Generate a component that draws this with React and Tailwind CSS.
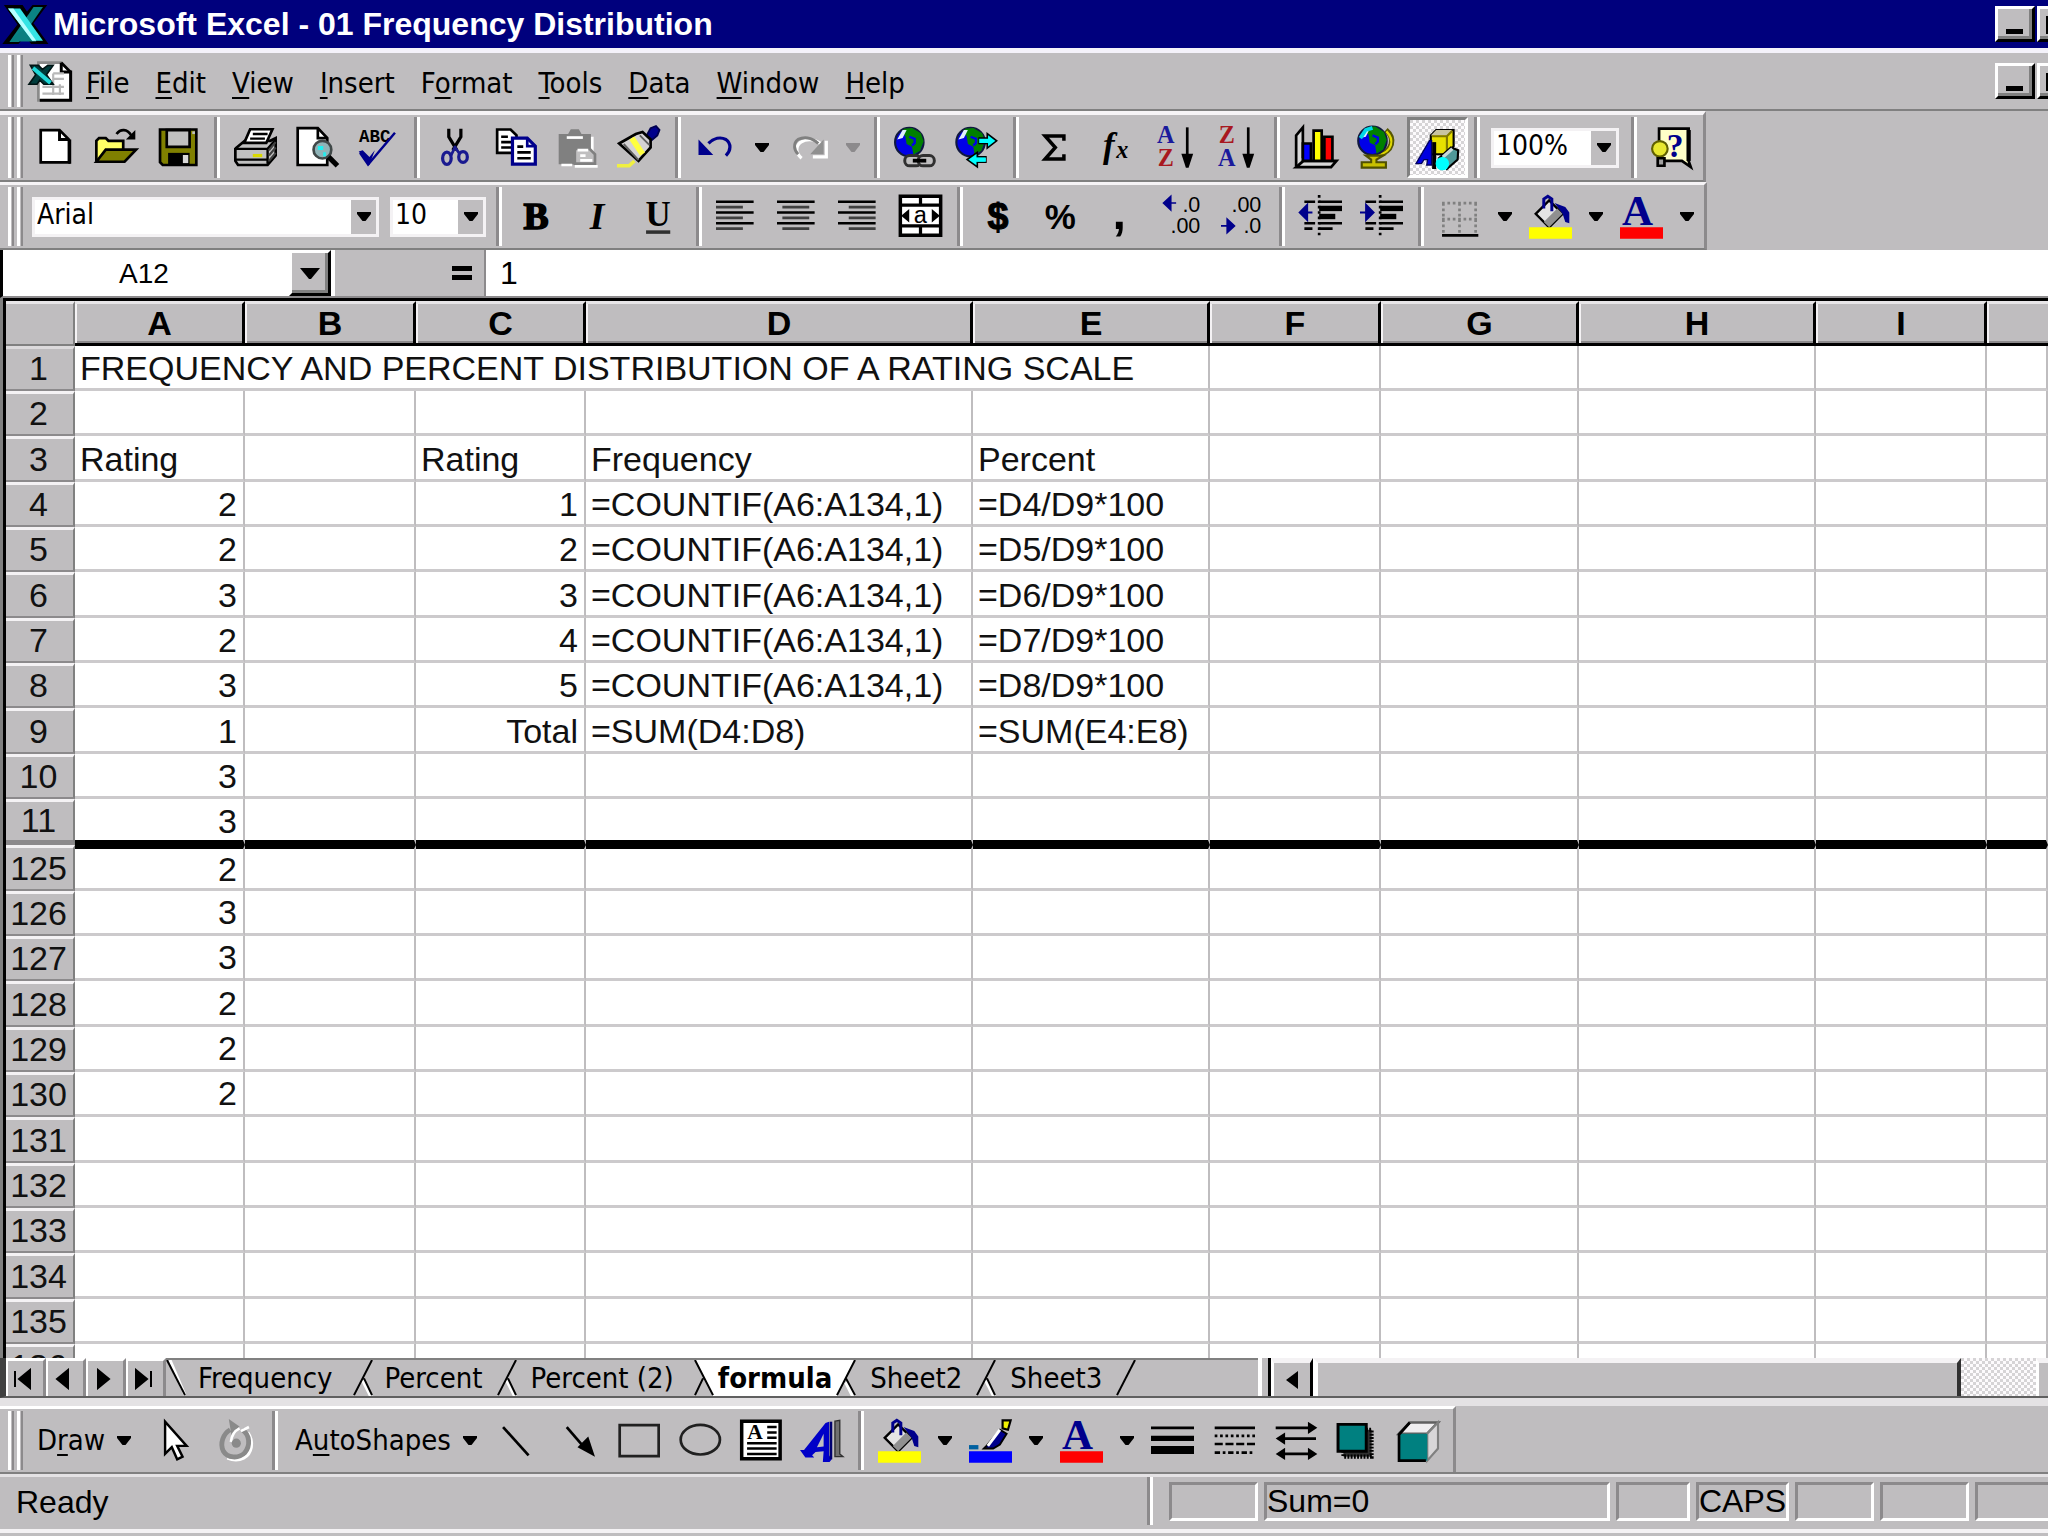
import React, { useState } from 'react';

// --- Constants ---
const MENUS = [
    { before: '', key: 'F', after: 'ile' },
    { before: '', key: 'E', after: 'dit' },
    { before: '', key: 'V', after: 'iew' },
    { before: '', key: 'I', after: 'nsert' },
    { before: 'F', key: 'o', after: 'rmat' },
    { before: '', key: 'T', after: 'ools' },
    { before: '', key: 'D', after: 'ata' },
    { before: '', key: 'W', after: 'indow' },
    { before: '', key: 'H', after: 'elp' },
];

const COLUMNS = ['A', 'B', 'C', 'D', 'E', 'F', 'G', 'H', 'I', 'J'];

const ROWS = [
    { n: 1, cells: { A: 'FREQUENCY AND PERCENT DISTRIBUTION OF A RATING SCALE' }, spill: 5 },
    { n: 2, cells: {} },
    { n: 3, cells: { A: 'Rating', C: 'Rating', D: 'Frequency', E: 'Percent' } },
    { n: 4, cells: { A: 2, C: 1, D: '=COUNTIF(A6:A134,1)', E: '=D4/D9*100' } },
    { n: 5, cells: { A: 2, C: 2, D: '=COUNTIF(A6:A134,1)', E: '=D5/D9*100' } },
    { n: 6, cells: { A: 3, C: 3, D: '=COUNTIF(A6:A134,1)', E: '=D6/D9*100' } },
    { n: 7, cells: { A: 2, C: 4, D: '=COUNTIF(A6:A134,1)', E: '=D7/D9*100' } },
    { n: 8, cells: { A: 3, C: 5, D: '=COUNTIF(A6:A134,1)', E: '=D8/D9*100' } },
    { n: 9, cells: { A: 1, C: 'Total', D: '=SUM(D4:D8)', E: '=SUM(E4:E8)' } },
    { n: 10, cells: { A: 3 } },
    { n: 11, cells: { A: 3 } },
    { n: 125, cells: { A: 2 } },
    { n: 126, cells: { A: 3 } },
    { n: 127, cells: { A: 3 } },
    { n: 128, cells: { A: 2 } },
    { n: 129, cells: { A: 2 } },
    { n: 130, cells: { A: 2 } },
    { n: 131, cells: {} },
    { n: 132, cells: {} },
    { n: 133, cells: {} },
    { n: 134, cells: {} },
    { n: 135, cells: {} },
    { n: 136, cells: {} },
];

const UI_FONT = "font-['DejaVu_Sans_Condensed','DejaVu_Sans',sans-serif]";
const CELL_FONT = "font-['Liberation_Sans',sans-serif]";
const RAISED = 'border-t-[3px] border-l-[3px] border-r-[3px] border-b-[3px] border-t-white border-l-white border-r-black border-b-black shadow-[inset_-3px_-3px_0_#808080]';
const DITHER = 'bg-[repeating-conic-gradient(#fdfbfd_0_25%,#d6d4d6_0_50%)] bg-[length:6px_6px]';

// --- Icons ---
const Icon = ({ children }) => (
    <svg viewBox="0 0 16 16" className="w-[43px] h-[43px] shrink-0 overflow-visible" fill="none" stroke="#000" strokeWidth="1" aria-hidden="true">
        {children}
    </svg>
);

const IconText = (props) => <text stroke="none" fill="#000" textAnchor="middle" fontFamily="Liberation Serif, serif" {...props} />;

const ExcelLogo = () => (
    <Icon>
        <path d="M1.500 1.500h5l2 3 2.500-3h3.500l-4.500 6 5 7h-4.500l-2.500-3.500-3 3.500H1l5-6.500z" fill="#001820" strokeWidth="1.600" />
        <path d="M11 1.500h3.500L5.500 14.500H2z" fill="#0a8484" stroke="none" />
        <path d="M9 9l3 5.300H2.500L5 11.500z" fill="#0a7f80" stroke="none" />
        <path d="M1.500 2H6l8.500 12H10.500z" fill="#35e4e4" stroke="none" />
        <path d="M1.500 2h2l8.500 12h-1.500z" fill="#b8ffff" stroke="none" />
    </Icon>
);

const WorkbookIcon = () => (
    <Icon>
        <path d="M3.500 1h8.500l3.500 3.500v10.500h-12z" fill="#fff" stroke="#8a8a8a" />
        <path d="M12 1v3.500h3.500V15H4" strokeWidth="1.100" />
        <path d="M12 1l3.500 3.500" />
        <path d="M9 5h4M9 7h4M5 10h8M5 12.500h8M9 5v8M11.500 9v4" stroke="#b8b8b8" strokeWidth=".8" />
        <path d="M.5 2h3l1.500 1.500L7 2h2L6.500 5.500 9 9H5.500L4 7.500 3 9H0l2.500-3.500z" fill="#003c3c" stroke="#001414" strokeWidth=".6" />
        <path d="M1.500 3l6.500 5.500" stroke="#20d8d8" strokeWidth="1.500" />
    </Icon>
);

const NewIcon = () => (
    <Icon>
        <path d="M2.500 1.500h7l3.500 3.500v8.500h-10.500z" fill="#fff" />
        <path d="M9.500 1.500v3.500h3.500M13.300 5v9" strokeWidth="1.100" />
    </Icon>
);

const OpenIcon = () => (
    <Icon>
        <path d="M.5 13V5.500l1-1h2.500l1 1h5.500v3.500" fill="#ffff66" />
        <path d="M.5 13.300L4 8.800h11.300l-4.300 4.500z" fill="#808000" />
        <path d="M8 3c1.500-2 4-2 5.500.5" />
        <path d="M15 1.500V5h-3.500z" fill="#000" stroke="none" />
    </Icon>
);

const SaveIcon = () => (
    <Icon>
        <path d="M1.500 1.300h13.500v13.200H2.500l-1-1z" fill="#808000" />
        <path d="M4 1.500h8.500v6.300H4z" fill="#c0c0c0" />
        <path d="M4.500 10h8v4.500h-8z" fill="#000" stroke="none" />
        <path d="M10 10.800h2v3h-2z" fill="#d8d8d8" stroke="none" />
        <path d="M13.500 2h1v1h-1z" fill="#c0c0c0" stroke="none" />
    </Icon>
);

const PrintIcon = () => (
    <Icon>
        <path d="M1 8l3-2.500h9.500L15.500 4.500V11l-3 3.500H1.500L.5 13V8.500z" fill="#c0c0c0" />
        <path d="M6 1.200h8.300L12 6.300H3.800z" fill="#fff" />
        <path d="M7 3h5.500M6 4.700h5.500M.5 8.500h12V14M12.500 8.500l3-3.500M.5 12.500h12" strokeWidth=".9" />
        <path d="M13 9l2.500-3M13 11l2.500-3M13 13l2.500-3" stroke="#404040" strokeWidth=".8" />
        <path d="M7 11h3.500" stroke="#d8d800" strokeWidth="1.200" />
    </Icon>
);

const PreviewIcon = () => (
    <Icon>
        <path d="M1 .8h7.500L12 4.500v10H1z" fill="#fff" />
        <path d="M8.500.8v3.700H12" />
        <circle cx="10.200" cy="8.800" r="3.300" fill="#8fb4b8" stroke="#404848" />
        <path d="M8.500 8.200h2M10.500 10.500h1" stroke="#20f0f0" strokeWidth="1.500" />
        <path d="M12.500 11.500l3.300 3.300" strokeWidth="1.900" />
    </Icon>
);

const SpellIcon = () => (
    <Icon>
        <IconText x="7" y="6" fontSize="6.500" fontFamily="Liberation Mono, monospace" fontWeight="bold">ABC</IconText>
        <path d="M1.500 10l3 4.300L14.500 2.500" stroke="#00008c" strokeWidth=".9" />
        <path d="M1 9.500l1.500-.5 2.500 2.500 2-2.500L5 14.500z" fill="#00008c" stroke="none" />
    </Icon>
);

const CutIcon = () => (
    <Icon>
        <path d="M5.500 1v3l3 5M10 1v3l-3 5" strokeWidth="1.200" />
        <ellipse cx="4.800" cy="12" rx="1.600" ry="2.300" stroke="#1a1a90" strokeWidth="1.200" />
        <ellipse cx="10.800" cy="11.500" rx="1.600" ry="2" stroke="#1a1a90" strokeWidth="1.200" />
        <path d="M8 7.500L6.300 11M7.500 7.500L9.300 10" stroke="#1a1a90" />
    </Icon>
);

const CopyIcon = () => (
    <Icon>
        <path d="M.8 1.300h5L8 3.500V10H.8z" fill="#fff" />
        <path d="M2.300 4h2.500M2.300 6h4M2.300 8h4" />
        <path d="M6.500 4.500H12l3 3v6.700H6.500z" fill="#fff" stroke="#00008c" strokeWidth="1.200" />
        <path d="M12 4.500v3h3" stroke="#00008c" />
        <path d="M8.300 7.700h2.200M8.300 9.800h5M8.300 12h5" />
    </Icon>
);

const PasteIcon = () => (
    <Icon>
        <path d="M1 3h3.500l1-1.800h3l1 1.800H13v11.200H1z" fill="#808080" stroke="none" />
        <path d="M4 4.300h6" stroke="#fff" />
        <path d="M13.500 4v6M2 14.500h4" stroke="#fff" />
        <path d="M7 8.500h5.500l2 2v3.500H7z" fill="#c0bfc0" stroke="#808080" />
        <path d="M8 9h4M9 11h2M9 12.800h4.500M7 15h8.500" stroke="#fff" />
    </Icon>
);

const PainterIcon = () => (
    <Icon>
        <path d="M10.500 4.500L12.500.8l2-.8 1.300 1.500-.8 2-3 2.500z" fill="#00008c" stroke="#000050" strokeWidth=".7" />
        <path d="M.8 6.500L7 3l2.500-.8L12.500 5v3L8 13z" fill="#d4d2d4" />
        <path d="M5.500 4.500l4 6" stroke="#ffff40" strokeWidth="2.200" />
        <path d="M2.500 6.700l5.500 6M8.500 3.500l3.500 3.500" stroke="#606060" strokeWidth=".7" />
        <path d="M0 14.800h4.500l2-1.800" stroke="#f0f040" strokeWidth="1.300" />
    </Icon>
);

const UndoIcon = () => (
    <Icon>
        <path d="M5 6.500C7 4.500 9.500 4 11.500 5c2 1.500 2 4 0 6" stroke="#00008c" strokeWidth="1.200" />
        <path d="M1.300 5v5.800h5.500z" fill="#00008c" stroke="none" />
    </Icon>
);

const RedoIcon = () => (
    <Icon>
        <path d="M13.500 7C11 5 8 4.500 5.500 6c-2 1.500-2 4 .3 6M15 5.500v6H10" stroke="#fff" strokeWidth="1.200" />
        <path d="M12 6.500C9.500 4 6.500 4 4.500 5c-2 1.500-1.500 4 0 5.500" stroke="#808080" strokeWidth="1.100" />
        <path d="M14 5v5.500H9z" fill="#909090" stroke="none" />
    </Icon>
);

const Globe = ({ cx = 6, cy = 6 }) => (
    <>
        <circle cx={cx} cy={cy} r="5.300" fill="#0000e8" stroke="#101840" strokeWidth=".8" />
        <path d={`M${cx - 2} ${cy - 5}l3-.3 3.300 2 1 3-1.300 3.500-2.500 1.500-.5-3-2-1-.5-3-1.500-1z`} fill="#008000" stroke="none" />
        <path d={`M${cx - 4.500} ${cy - 1}l2-3.500 1.500 0-1.500 3z`} fill="#e0f0ff" stroke="none" />
        <path d={`M${cx} ${cy - 2}l2 .8v1.500l-1 1`} stroke="#0000e8" strokeWidth=".9" />
    </>
);

const HyperlinkIcon = () => (
    <Icon>
        <Globe cx={5.7} cy={6} />
        <rect x="4" y="11" width="6" height="3.800" rx="1.800" stroke="#303030" strokeWidth="1.100" fill="#c0bfc0" />
        <rect x="9" y="11" width="6" height="3.800" rx="1.800" stroke="#303030" strokeWidth="1.100" fill="#c0bfc0" />
        <path d="M7 12.900h5" strokeWidth="1.400" />
    </Icon>
);

const WebIcon = () => (
    <Icon>
        <Globe cx={5.8} cy={6} />
        <path d="M9 4.500h3V2.800l3.500 2.700L12 8.200V6.500H9z" fill="#00ffff" strokeWidth=".6" />
        <path d="M11.500 11.500H8.300V9.800L4.500 12.500l3.800 2.700v-1.700h3.200z" fill="#00ffff" strokeWidth=".6" />
        <path d="M9 4.700h4v1.600H9zM7 11.700h4.500v1.600H7z" fill="#00ffff" stroke="none" />
    </Icon>
);

const SumIcon = () => (
    <Icon>
        <path d="M11.500 5.500V3.700H4.500l3.800 4.300-3.800 4.300h7v-1.800" strokeWidth="1.300" />
    </Icon>
);

const FunctionIcon = () => (
    <Icon>
        <IconText x="5.500" y="11.500" fontSize="13" fontStyle="italic" fontWeight="bold">f</IconText>
        <IconText x="10.500" y="12" fontSize="9" fontStyle="italic" fontWeight="bold">x</IconText>
    </Icon>
);

const SortIcon = ({ top, bottom, topColor, bottomColor }) => (
    <Icon>
        <IconText x="4" y="6.500" fontSize="9" fontWeight="bold" fill={topColor}>{top}</IconText>
        <IconText x="4" y="15" fontSize="9" fontWeight="bold" fill={bottomColor}>{bottom}</IconText>
        <path d="M12 .5V12" />
        <path d="M9.800 10.300h4.400L12.500 15.500h-1z" fill="#000" stroke="none" />
    </Icon>
);

const ChartIcon = () => (
    <Icon>
        <path d="M.8 15V3.500l2.500-3V12" fill="#d8d8d8" />
        <path d="M.8 15.300h13l2-2.300H3.500z" fill="#d8d8d8" />
        <path d="M3.300 6.500h3V13h-3z" fill="#0000ff" />
        <path d="M7.300 1.700h3V13h-3z" fill="#ffff00" />
        <path d="M11.300 4h3v9h-3z" fill="#ff0000" />
    </Icon>
);

const MapIcon = () => (
    <Icon>
        <path d="M11.500 1.500c3.500 3 3 8-3.500 9.500" stroke="#585800" strokeWidth="2" />
        <path d="M11.700 2c3 3 2.500 7.500-3.200 8.800" stroke="#e0d800" strokeWidth=".8" />
        <Globe cx={6.500} cy={5.500} />
        <path d="M2 4.500l2-3 2.500-.8" stroke="#00d8e8" strokeWidth="1.400" />
        <path d="M4 11h6.500l-2.500 1.500v1h3.500v2h-9v-2H6v-1z" fill="#c8c000" stroke="#505000" strokeWidth=".8" />
    </Icon>
);

const DrawingIcon = () => (
    <Icon>
        <path d="M5.500 3.500l2-2h6.500v6l-2 3H5.500z" fill="#e8e000" strokeWidth=".8" />
        <path d="M5.500 3.500l2-2h6l-2 2z" fill="#c8c4a0" stroke="none" />
        <path d="M6 3.800h5.500v6M11.500 3.800l2-2" stroke="#807800" strokeWidth=".8" />
        <path d="M6 6v10h1.500V6z" fill="#000" stroke="none" />
        <path d="M5.800 5.500v9H4l.3-2H3l-1 1.500H0L5 5.500z" fill="#0000e0" stroke="#000060" strokeWidth=".5" />
        <path d="M8.500 12l4.500-4 2.700 1-.2 3.500-4 3.500z" fill="#509898" strokeWidth=".8" />
        <path d="M10 11.500l3.500-3" stroke="#c8d8d8" strokeWidth="1.200" />
        <circle cx="9.800" cy="14" r="2.500" fill="#00ffff" stroke="none" />
    </Icon>
);

const HelpIcon = () => (
    <Icon>
        <path d="M3 1h11v12l.8 2.300L11.500 13H3z" fill="#ffffc8" />
        <path d="M14 1.500V13" strokeWidth="1.600" />
        <IconText x="9" y="11.500" fontSize="12.500" fontWeight="bold" fill="#00008c">?</IconText>
        <circle cx="3.300" cy="8.500" r="2.900" fill="#e8e830" stroke="#606000" strokeWidth=".8" />
        <path d="M2.500 12H5v2.800H2.500z" fill="#a0a0a0" />
    </Icon>
);

const AlignIcon = ({ short }) => (
    <Icon>
        <path d="M0 2.500h14M0 6.500h14M0 10.500h14" />
        <path d={`M${short} 4.500h10M${short} 8.500h10M${short} 12.500h10`} stroke="#404040" />
    </Icon>
);

const MergeIcon = () => (
    <Icon>
        <path d="M.5.500h15v14.500H.5z" fill="#fff" strokeWidth="1.300" />
        <path d="M.5 3.800h15M.5 11.500h15M8 .5v3.300M8 11.500V15" strokeWidth="1.200" />
        <path d="M.8 7.700l3-2.500v5zM15.200 7.700l-3-2.500v5z" fill="#000" stroke="none" />
        <IconText x="8" y="10.500" fontSize="9" fontFamily="Liberation Mono, monospace">a</IconText>
    </Icon>
);

const DecimalIcon = ({ increase }) => (
    <Icon>
        <IconText x="15" y="6.500" fontSize="8" textAnchor="end" fontFamily="Liberation Sans, sans-serif">{increase ? '.0' : '.00'}</IconText>
        <IconText x="15" y="14" fontSize="8" textAnchor="end" fontFamily="Liberation Sans, sans-serif">{increase ? '.00' : '.0'}</IconText>
        {increase
            ? <path d="M6 3H3M1.300 3L4 .5v5z" fill="#00008c" stroke="#00008c" strokeWidth=".6" />
            : <path d="M0 11.500h3M5 11.500L2.300 9v5z" fill="#00008c" stroke="#00008c" strokeWidth=".6" />}
    </Icon>
);

const IndentIcon = ({ right }) => (
    <Icon>
        <path d="M2 2.500h4M2 10.500h4M2 12.500h3" />
        <path d="M7.500 0v15" strokeDasharray="1 1" />
        <path d="M7.500 2.500h8.500M7.500 10.500h8.500M7.500 12.500h5" />
        <path d="M7.500 5h8.500" strokeWidth="2" />
        <path d="M7.500 8h6" strokeWidth="2" />
        {right
            ? <path d="M0 6.500h3M5 6.500L2.300 3.800v5.400z" fill="#00008c" stroke="#00008c" strokeWidth=".8" />
            : <path d="M5 6.500H3M.3 6.500L3 3.800v5.400z" fill="#00008c" stroke="#00008c" strokeWidth=".8" />}
    </Icon>
);

const BordersIcon = () => (
    <Icon>
        <path d="M1.500 3h13M1.500 9h13M2 3v11M8 3v11M14 3v11" stroke="#808080" strokeDasharray="1 1" />
        <path d="M1.500 15h13.500" />
    </Icon>
);

const BucketIcon = () => (
    <Icon>
        <path d="M2.500 7L7.500 2l5 5-5 5z" fill="#e4e4e4" strokeWidth=".9" />
        <path d="M7.500 12l5-5-2-2-5 5z" fill="#909090" stroke="none" />
        <path d="M5.500 5V1.500l1.500-1 1.500 1V6" stroke="#00008c" strokeWidth="1.100" />
        <path d="M9.500 3l4 1.500 1.500 2v4l-1.500-.5-1-3z" fill="#00008c" stroke="none" />
        <path d="M0 12h16v4.300H0z" fill="#ffff00" stroke="none" />
    </Icon>
);

const LineColorIcon = () => (
    <Icon>
        <path d="M12.500.500h3L14.500 4l-2-.5z" fill="#f0f000" strokeWidth=".8" />
        <path d="M11.500 4l-5 6-1 1h3.500l2.500-1.500 2.500-4z" fill="#00008c" strokeWidth=".7" />
        <path d="M11.500 4l-4.500 6" stroke="#fff" strokeWidth="1.100" />
        <path d="M0 10.500h3.500" stroke="#0060a0" strokeWidth="1.600" />
        <path d="M0 12h16v4.300H0z" fill="#0000ff" stroke="none" />
    </Icon>
);

const FontColorIcon = () => (
    <Icon>
        <IconText x="6.500" y="11" fontSize="16" fontWeight="bold" fill="#00008c">A</IconText>
        <path d="M0 12h16v4.300H0z" fill="#ff0000" stroke="none" />
    </Icon>
);

const PointerIcon = () => (
    <Icon>
        <path d="M4.500 1v12l2.500-2.500 2 4.500 2-1-2-4h3.500z" fill="#fff" strokeWidth=".9" />
    </Icon>
);

const RotateIcon = () => (
    <Icon>
        <path d="M12.500 5c2.500 3.500 1.500 8-1.500 9.500-2 1-4 .8-6 0" stroke="#fff" strokeWidth="1.300" />
        <path d="M10.500 4c3 2 3 6 1 8.500-2.500 2.500-6.500 2-8-.5-1.500-3 0-6.500 2.500-8" stroke="#8a8a8a" strokeWidth="1.800" />
        <path d="M5.500 0l4 2.800L6.500 6z" fill="#8a8a8a" stroke="none" />
        <path d="M9.500 3.500c-2 1-3 3-3.200 5M13 3l-3 1.500" stroke="#fff" />
        <circle cx="8.300" cy="9" r="1.700" fill="#8a8a8a" stroke="none" />
    </Icon>
);

const LineIcon = () => (
    <Icon>
        <path d="M3 3l9.500 10.500" />
    </Icon>
);

const ArrowIcon = () => (
    <Icon>
        <path d="M4 3l6 7" />
        <path d="M14.500 14L8 10.500l4-4z" fill="#000" stroke="none" />
    </Icon>
);

const RectIcon = () => (
    <Icon>
        <path d="M1 2.300h14.500v11.500H1z" stroke="#202020" />
    </Icon>
);

const OvalIcon = () => (
    <Icon>
        <ellipse cx="8.300" cy="7.700" rx="7.300" ry="5.500" stroke="#202020" />
    </Icon>
);

const TextBoxIcon = () => (
    <Icon>
        <path d="M1 .8h14.300v14H1z" fill="#fff" strokeWidth="1.300" />
        <IconText x="6" y="7.500" fontSize="8" fontWeight="bold">A</IconText>
        <path d="M10.500 3h3.500M10.500 5h3.500M10.500 7h3.500M3 9h11M3 11h11M3 13h11" strokeWidth=".9" />
    </Icon>
);

const WordArtIcon = () => (
    <Icon>
        <path d="M13 .8l1.800-.3V13l1.200 1h-3z" fill="#707070" stroke="#303030" strokeWidth=".5" />
        <path d="M10.800 1v12.500l1 1.500-.8 1H8.500l.3-4-3 .3L4.500 13.500l.8.8H2L0 11.500h1.500L9.500 1.500z" fill="#0000c8" stroke="none" />
        <path d="M8.800 5.500v4.700l-2.500.3z" fill="#c0bfc0" stroke="none" />
        <path d="M11.500 1v14" stroke="#000070" />
    </Icon>
);

const LineStyleIcon = () => (
    <Icon>
        <path d="M0 3.300h16" />
        <path d="M0 7.200h16" strokeWidth="2" />
        <path d="M0 11.500h16" strokeWidth="3" />
    </Icon>
);

const DashStyleIcon = () => (
    <Icon>
        <path d="M1 3.300h15" />
        <path d="M1 6.300h15" strokeDasharray="1 1" />
        <path d="M1 9.300h15" strokeDasharray="3 1" />
        <path d="M1 12.500h15" strokeDasharray="2 1 1 1" />
    </Icon>
);

const ArrowStyleIcon = () => (
    <Icon>
        <path d="M1 3.300h13M3 7.300h13M3 13h12" />
        <path d="M16.500 3.300L13 1v4.600zM1 7.300L4.500 5v4.600zM1 13l3.500-2.300v4.600zM16.500 13L13 10.700v4.600z" fill="#000" stroke="none" />
    </Icon>
);

const ShadowIcon = () => (
    <Icon>
        <path d="M3.500 4h10.500v10H3.500z" stroke="#000" strokeWidth="1.500" strokeDasharray=".7 .5" fill="#303030" />
        <path d="M1.500 2h10.500v10H1.500z" fill="#008080" strokeWidth="1.100" />
    </Icon>
);

const CubeIcon = () => (
    <Icon>
        <path d="M1.500 5.500L5.500 1.300h10.500L12 5.500z" fill="#f0eef0" stroke="#606060" />
        <path d="M12 5.500l4-4.200V11l-4 4.500z" fill="#d8d6d8" stroke="#808080" strokeWidth=".8" />
        <path d="M1.500 5.500H12v10H1.500z" fill="#008080" stroke="none" />
        <path d="M5.500 1.300L1.500 5.800v9.700H11.500" />
    </Icon>
);

// --- Toolbar pieces ---
const Grip = () => (
    <div className="flex w-[25px] shrink-0 gap-[3px] self-stretch py-[2px] pl-2">
        <div className="w-[6px] border-l-[3px] border-r-2 border-l-white border-r-[#8c8a8c] bg-[#bfbdbf]" />
        <div className="w-[6px] border-l-[3px] border-r-2 border-l-white border-r-[#8c8a8c] bg-[#bfbdbf]" />
    </div>
);

const Divider = () => (
    <div className="flex w-[17px] shrink-0 justify-center self-stretch py-[2px]">
        <div className="w-[6px] border-l-[3px] border-r-[3px] border-l-[#8c8a8c] border-r-white" />
    </div>
);

const ToolButton = ({ label, pressed, children }) => (
    <button
        type="button"
        aria-label={label}
        aria-pressed={pressed}
        className={`flex w-[61px] shrink-0 items-center justify-center ${
            pressed ? `self-stretch my-[2px] border-[3px] border-t-[#808080] border-l-[#808080] border-r-white border-b-white ${DITHER}` : ''
        }`}
    >
        {children}
    </button>
);

const Caret = ({ color = '#000' }) => (
    <svg viewBox="0 0 14 9" className="h-[9px] w-[14px] shrink-0" aria-hidden="true">
        <path d="M0 0h14v2L8.500 9h-3L0 2z" fill={color} />
    </svg>
);

const CaretButton = ({ label, color }) => (
    <button type="button" aria-label={label} className="flex w-[30px] shrink-0 items-center justify-center">
        <Caret color={color} />
    </button>
);

const Combo = ({ label, value, options, width }) => (
    <div className={`relative h-10 shrink-0 border-[3px] border-[#f4f2f4] bg-white ${width}`}>
        <select
            aria-label={label}
            defaultValue={value}
            className="h-full w-full appearance-none bg-white pr-7 pb-1 pl-[2px] text-[28px] leading-[30px] outline-none"
        >
            {options.map((o) => <option key={o} value={o}>{o}</option>)}
        </select>
        <span className="pointer-events-none absolute inset-y-0 right-0 flex w-[25px] items-center justify-center bg-[#bfbdbf]">
            <Caret />
        </span>
    </div>
);

const WindowButtons = () => (
    <div className="ml-auto flex w-[53px] shrink-0 gap-[2px] overflow-hidden">
        <button type="button" aria-label="Minimize" className={`flex h-9 w-10 shrink-0 items-end bg-[#bfbdbf] pb-[5px] pl-2 ${RAISED}`}>
            <span className="h-[5px] w-[17px] bg-black" />
        </button>
        <button type="button" aria-label="Restore" className={`flex h-9 w-10 shrink-0 items-end bg-[#bfbdbf] pb-[5px] pl-[6px] ${RAISED}`}>
            <span className="h-[18px] w-[22px] border-2 border-t-4 border-black" />
        </button>
    </div>
);

const StandardToolbar = () => (
    <div className="flex w-max items-center border-t-4 border-r-[3px] border-b-2 border-t-[#f6f4f6] border-r-[#8c8a8c] border-b-[#808080] h-[71px]">
        <Grip />
        <ToolButton label="New"><NewIcon /></ToolButton>
        <ToolButton label="Open"><OpenIcon /></ToolButton>
        <ToolButton label="Save"><SaveIcon /></ToolButton>
        <Divider />
        <ToolButton label="Print"><PrintIcon /></ToolButton>
        <ToolButton label="Print Preview"><PreviewIcon /></ToolButton>
        <ToolButton label="Spelling"><SpellIcon /></ToolButton>
        <Divider />
        <ToolButton label="Cut"><CutIcon /></ToolButton>
        <ToolButton label="Copy"><CopyIcon /></ToolButton>
        <ToolButton label="Paste"><PasteIcon /></ToolButton>
        <ToolButton label="Format Painter"><PainterIcon /></ToolButton>
        <Divider />
        <ToolButton label="Undo"><UndoIcon /></ToolButton>
        <CaretButton label="Undo list" />
        <ToolButton label="Redo"><RedoIcon /></ToolButton>
        <CaretButton label="Redo list" color="#8c8a8c" />
        <Divider />
        <ToolButton label="Insert Hyperlink"><HyperlinkIcon /></ToolButton>
        <ToolButton label="Web Toolbar"><WebIcon /></ToolButton>
        <Divider />
        <ToolButton label="AutoSum"><SumIcon /></ToolButton>
        <ToolButton label="Paste Function"><FunctionIcon /></ToolButton>
        <ToolButton label="Sort Ascending"><SortIcon top="A" bottom="Z" topColor="#1a1a9c" bottomColor="#a81820" /></ToolButton>
        <ToolButton label="Sort Descending"><SortIcon top="Z" bottom="A" topColor="#a81820" bottomColor="#1a1a9c" /></ToolButton>
        <Divider />
        <ToolButton label="Chart Wizard"><ChartIcon /></ToolButton>
        <ToolButton label="Map"><MapIcon /></ToolButton>
        <ToolButton label="Drawing" pressed><DrawingIcon /></ToolButton>
        <Divider />
        <div className="px-[6px]">
            <Combo label="Zoom" value="100%" options={['200%', '100%', '75%', '50%', '25%']} width="w-32" />
        </div>
        <Divider />
        <ToolButton label="Office Assistant"><HelpIcon /></ToolButton>
    </div>
);

const FormattingToolbar = () => (
    <div className="flex w-max items-center border-t-[3px] border-r-[3px] border-b-2 border-t-[#f6f4f6] border-r-[#8c8a8c] border-b-[#808080] pr-[2px] h-[68px]">
        <Grip />
        <div className="flex gap-[11px] pr-1 pl-[7px]">
            <Combo label="Font" value="Arial" options={['Arial', 'Courier New', 'Times New Roman']} width="w-[347px]" />
            <Combo label="Font Size" value="10" options={['8', '9', '10', '11', '12', '14']} width="w-24" />
        </div>
        <Divider />
        <ToolButton label="Bold"><Icon><IconText x="7.500" y="12.500" fontSize="14" fontWeight="bold" strokeWidth=".6" stroke="#000">B</IconText></Icon></ToolButton>
        <ToolButton label="Italic"><Icon><IconText x="7.500" y="12.500" fontSize="14" fontWeight="bold" fontStyle="italic">I</IconText></Icon></ToolButton>
        <ToolButton label="Underline">
            <Icon>
                <IconText x="7.500" y="11.500" fontSize="13" fontWeight="bold">U</IconText>
                <path d="M3 13.800h9" stroke="#303030" strokeWidth="1.300" />
            </Icon>
        </ToolButton>
        <Divider />
        <ToolButton label="Align Left"><AlignIcon short={0} /></ToolButton>
        <ToolButton label="Center"><AlignIcon short={2} /></ToolButton>
        <ToolButton label="Align Right"><AlignIcon short={4} /></ToolButton>
        <ToolButton label="Merge and Center"><MergeIcon /></ToolButton>
        <Divider />
        <ToolButton label="Currency Style"><Icon><IconText x="7.800" y="12.500" fontSize="14" fontWeight="bold" strokeWidth=".4" stroke="#000" fontFamily="Liberation Sans, sans-serif">$</IconText></Icon></ToolButton>
        <ToolButton label="Percent Style"><Icon><IconText x="8.300" y="12.500" fontSize="13" fontWeight="bold" fontFamily="Liberation Sans, sans-serif">%</IconText></Icon></ToolButton>
        <ToolButton label="Comma Style"><Icon><IconText x="7.500" y="12.500" fontSize="18" fontWeight="bold" fontFamily="Liberation Sans, sans-serif">,</IconText></Icon></ToolButton>
        <ToolButton label="Increase Decimal"><DecimalIcon increase /></ToolButton>
        <ToolButton label="Decrease Decimal"><DecimalIcon /></ToolButton>
        <Divider />
        <ToolButton label="Decrease Indent"><IndentIcon /></ToolButton>
        <ToolButton label="Increase Indent"><IndentIcon right /></ToolButton>
        <Divider />
        <ToolButton label="Borders"><BordersIcon /></ToolButton>
        <CaretButton label="Borders list" />
        <ToolButton label="Fill Color"><BucketIcon /></ToolButton>
        <CaretButton label="Fill Color list" />
        <ToolButton label="Font Color"><FontColorIcon /></ToolButton>
        <CaretButton label="Font Color list" />
    </div>
);

const DrawingToolbar = () => (
    <div className="flex w-max items-center border-t-[3px] border-r-[3px] border-t-white border-r-[#8c8a8c] pr-[6px] h-[66px]">
        <Grip />
        <button type="button" className="flex w-[119px] items-center gap-3 pl-3 text-[29px]">
            <span>D<u className="underline-offset-4">r</u>aw</span>
            <Caret />
        </button>
        <ToolButton label="Select Objects"><PointerIcon /></ToolButton>
        <ToolButton label="Free Rotate"><RotateIcon /></ToolButton>
        <Divider />
        <button type="button" className="flex w-[203px] items-center gap-3 pl-3 text-[29px]">
            <span>A<u className="underline-offset-4">u</u>toShapes</span>
            <Caret />
        </button>
        <ToolButton label="Line"><LineIcon /></ToolButton>
        <ToolButton label="Arrow"><ArrowIcon /></ToolButton>
        <ToolButton label="Rectangle"><RectIcon /></ToolButton>
        <ToolButton label="Oval"><OvalIcon /></ToolButton>
        <ToolButton label="Text Box"><TextBoxIcon /></ToolButton>
        <ToolButton label="Insert WordArt"><WordArtIcon /></ToolButton>
        <Divider />
        <ToolButton label="Shape Fill"><BucketIcon /></ToolButton>
        <CaretButton label="Shape Fill list" />
        <ToolButton label="Line Color"><LineColorIcon /></ToolButton>
        <CaretButton label="Line Color list" />
        <ToolButton label="Text Color"><FontColorIcon /></ToolButton>
        <CaretButton label="Text Color list" />
        <ToolButton label="Line Style"><LineStyleIcon /></ToolButton>
        <ToolButton label="Dash Style"><DashStyleIcon /></ToolButton>
        <ToolButton label="Arrow Style"><ArrowStyleIcon /></ToolButton>
        <ToolButton label="Shadow"><ShadowIcon /></ToolButton>
        <ToolButton label="3-D"><CubeIcon /></ToolButton>
    </div>
);

// --- Sheet ---
const Row = ({ row, index }) => {
    // the window is split between rows 11 and 125
    const aboveSplit = row.n === 11;
    const belowSplit = row.n === 125;
    const edge = aboveSplit
        ? 'border-b-[5px] border-b-black'
        : belowSplit
            ? 'border-t-4 border-t-black border-b-[3px] border-b-[#cccacc]'
            : 'border-b-[3px] border-b-[#cccacc]';
    const height = index % 3 === 2 ? 'h-[46px]' : 'h-[45px]';
    const columns = row.spill ? ['A', ...COLUMNS.slice(row.spill)] : COLUMNS;

    return (
        <tr className={height}>
            <th
                scope="row"
                className={`border-r-2 border-r-[#808080] bg-[#bfbdbf] pl-0 pr-[2px] pt-0 pb-[2px] text-center font-normal leading-[36px] ${
                    aboveSplit ? 'border-b-[5px] border-b-[#8c8a8c]' : 'border-b-2 border-b-[#8c8a8c]'
                } ${index > 0 ? 'border-t-[3px] border-t-[#f4f2f4]' : 'border-t-[3px] border-t-[#dcdadc]'}`}
            >
                {row.n}
            </th>
            {columns.map((c) => {
                const value = row.cells[c];
                const right = typeof value === 'number' || value === 'Total';
                return (
                    <td
                        key={c}
                        colSpan={c === 'A' && row.spill ? row.spill : 1}
                        className={`border-r-2 border-r-[#bfbdbf] bg-white pb-0 pl-[5px] leading-[36px] whitespace-nowrap ${right ? 'pr-[6px] text-right' : 'pr-0'} ${index > 10 ? 'pt-0' : 'pt-[2px]'} ${edge}`}
                    >
                        {value}
                    </td>
                );
            })}
        </tr>
    );
};

const Sheet = () => (
    <div className="min-h-0 flex-1 overflow-hidden border-l-[3px] border-l-[#808080]">
        <div className="h-full border-t-[3px] border-l-[3px] border-black bg-white">
            <table className={`w-full table-fixed border-separate border-spacing-0 text-[34px] text-[#111] ${CELL_FONT}`}>
                <colgroup>
                    <col className="w-[69px]" />
                    <col className="w-[170px]" />
                    <col className="w-[171px]" />
                    <col className="w-[170px]" />
                    <col className="w-[387px]" />
                    <col className="w-[237px]" />
                    <col className="w-[171px]" />
                    <col className="w-[198px]" />
                    <col className="w-[237px]" />
                    <col className="w-[171px]" />
                    <col />
                </colgroup>
                <thead>
                    <tr className="h-[45px]">
                        <td className="border-t-[3px] border-r-2 border-b-2 border-t-[#e8e6e8] border-r-[#808080] border-b-[#808080] bg-[#bfbdbf]" />
                        {COLUMNS.map((c) => (
                            <th
                                key={c}
                                scope="col"
                                className="border-t-[3px] border-r-[3px] border-b-[3px] border-t-[#e8e6e8] border-r-black border-b-black bg-[#bfbdbf] pr-0 pl-[2px] pt-0 pb-[2px] text-center text-[34px] leading-[36px] font-bold text-black shadow-[inset_2px_0_0_#f4f2f4,inset_0_-2px_0_#8c8a8c] last:border-r-0"
                            >
                                {c === 'J' ? '' : c}
                            </th>
                        ))}
                    </tr>
                </thead>
                <tbody>
                    {ROWS.map((row, i) => <Row key={row.n} row={row} index={i} />)}
                </tbody>
            </table>
        </div>
    </div>
);

// --- Sheet tabs ---
const NAV = [
    { label: 'First sheet', d: 'M3 3v16M18 2v18L7 11z' },
    { label: 'Previous sheet', d: 'M16 2v18L5 11z' },
    { label: 'Next sheet', d: 'M6 2v18l11-9z' },
    { label: 'Last sheet', d: 'M19 3v16M4 2v18l11-9z' },
];

const TabEdge = ({ kind }) => (
    <svg viewBox="0 0 20 39" className="h-full w-5 shrink-0" preserveAspectRatio="none" fill="none" strokeWidth="2" aria-hidden="true">
        {kind === 'start' && (
            <>
                <path d="M4 0l15 38" stroke="#fff" strokeWidth="3" />
                <path d="M1 0l18 38" stroke="#000" />
            </>
        )}
        {kind === 'between' && (
            <>
                <path d="M10 22l8 17" stroke="#fff" strokeWidth="4" />
                <path d="M19 0L1 38M11 20l8 18" stroke="#000" />
            </>
        )}
        {kind === 'open' && (
            <>
                <path d="M1 0h19v39h-1z" fill="#fff" />
                <path d="M1 0l18 38M9 20L1 38" stroke="#000" />
            </>
        )}
        {kind === 'close' && (
            <>
                <path d="M0 0h19L1 39H0z" fill="#fff" />
                <path d="M10 24l7 15" stroke="#fff" strokeWidth="4" />
                <path d="M19 0L1 38M10 20l9 18" stroke="#000" />
            </>
        )}
        {kind === 'end' && <path d="M19 0L1 38" stroke="#000" />}
    </svg>
);

const TABS = [
    { name: 'Frequency', after: 'between', pad: 'pl-3 pr-5' },
    { name: 'Percent', after: 'between', pad: 'pl-3 pr-[14px]' },
    { name: 'Percent (2)', after: 'open', pad: 'pl-[14px] pr-5' },
    { name: 'formula', after: 'close', pad: 'px-1' },
    { name: 'Sheet2', after: 'between', pad: 'px-[14px]' },
    { name: 'Sheet3', after: 'end', pad: 'px-[14px]' },
];

const TabStrip = () => (
    <div className="flex h-[40px] shrink-0 border-b-2 border-l-[6px] border-b-[#606060] border-l-[#404040]">
        {NAV.map((n) => (
            <button key={n.label} type="button" aria-label={n.label} className="flex w-10 shrink-0 items-center justify-center border-t-[3px] border-r-[3px] border-l-2 border-t-white border-l-white border-r-[#8c8a8c] pr-[6px]">
                <svg viewBox="0 0 22 22" className="h-[22px] w-[22px]" fill="#000" stroke="#000" strokeWidth="2" aria-hidden="true"><path d={n.d} /></svg>
            </button>
        ))}
        <div role="tablist" className="flex min-w-0 flex-1 border-t-2 border-[#808080]">
            <TabEdge kind="start" />
            {TABS.map((t) => (
                <React.Fragment key={t.name}>
                    <button
                        type="button"
                        role="tab"
                        aria-selected={t.name === 'formula'}
                        className={`shrink-0 text-[29px] leading-[36px] whitespace-nowrap ${t.pad} ${t.name === 'formula' ? 'bg-white font-bold' : ''}`}
                    >
                        {t.name}
                    </button>
                    <TabEdge kind={t.after} />
                </React.Fragment>
            ))}
        </div>
        <div className="flex w-[790px] shrink-0">
            <div className="w-[13px] shrink-0 border-r-[3px] border-l-4 border-l-white border-r-black" />
            <button type="button" aria-label="Scroll left" className="flex w-[42px] shrink-0 items-center justify-center border-t-[5px] border-r-[3px] border-l-[3px] border-t-[#f4f2f4] border-l-white border-r-black">
                <svg viewBox="0 0 12 18" className="h-[18px] w-3" aria-hidden="true"><path d="M12 0v18L0 9z" /></svg>
            </button>
            <div className={`flex flex-1 pr-[75px] ${DITHER}`}>
                <div className="flex-1 border-t-[5px] border-r-4 border-l-[5px] border-t-[#f4f2f4] border-l-white border-r-[#303030] bg-[#bfbdbf]" />
            </div>
            <button type="button" aria-label="Scroll right" className="w-[12px] shrink-0 border-t-[5px] border-l-[3px] border-t-[#f4f2f4] border-l-white" />
        </div>
    </div>
);

const StatusCell = ({ width, children }) => (
    <div className={`flex h-[39px] shrink-0 items-center overflow-hidden border-[3px] border-t-[#8c8a8c] border-l-[#8c8a8c] border-r-white border-b-white ${width}`}>
        {children}
    </div>
);

// --- App ---
const App = () => {
    const [reference, setReference] = useState('A12');
    const [formula, setFormula] = useState('1');

    return (
        <div className={`flex h-screen flex-col overflow-hidden bg-[#bfbdbf] text-black ${UI_FONT}`}>
            {/* Title bar */}
            <header className="flex h-12 shrink-0 items-center bg-[#00007d] pl-1 text-white">
                <ExcelLogo />
                <h1 className={`pl-[6px] text-[32px] leading-[44px] font-bold whitespace-nowrap ${CELL_FONT}`}>Microsoft Excel - 01 Frequency Distribution</h1>
                <WindowButtons />
            </header>

            {/* Menu bar */}
            <nav className="flex h-[63px] shrink-0 items-center border-t-[5px] border-b-2 border-t-[#f4f2fa] border-b-[#808080]">
                <Grip />
                <div className="pr-px pl-1"><WorkbookIcon /></div>
                {MENUS.map((m) => (
                    <button key={m.key + m.after} type="button" className="px-[13px] pt-1 text-[29px] leading-9">
                        {m.before}<u className="underline-offset-4">{m.key}</u>{m.after}
                    </button>
                ))}
                <WindowButtons />
            </nav>

            <StandardToolbar />
            <FormattingToolbar />

            {/* Formula bar */}
            <div className={`flex h-[48px] shrink-0 border-b-2 border-l-[3px] border-b-[#8c8a8c] border-l-black ${CELL_FONT}`}>
                <input
                    aria-label="Name Box"
                    value={reference}
                    onChange={(e) => setReference(e.target.value)}
                    className="w-[286px] bg-white pt-[2px] pr-1 text-center text-[28px] outline-none"
                />
                <button type="button" aria-label="Name list" className={`flex w-[42px] shrink-0 items-center justify-center ${RAISED}`}>
                    <svg viewBox="0 0 20 11" className="h-[11px] w-5" aria-hidden="true"><path d="M0 0h20L11 11H9z" /></svg>
                </button>
                <button type="button" aria-label="Edit Formula" className="flex w-[155px] shrink-0 items-center justify-end border-r-2 border-l-4 border-l-white border-r-[#8c8a8c] pr-3">
                    <svg viewBox="0 0 20 14" className="h-[14px] w-5" aria-hidden="true"><path d="M0 0h20v5H0zM0 9h20v5H0z" /></svg>
                </button>
                <input
                    aria-label="Formula"
                    value={formula}
                    onChange={(e) => setFormula(e.target.value)}
                    className="min-w-0 flex-1 bg-white pl-[14px] text-[32px] outline-none"
                />
            </div>

            <Sheet />
            <TabStrip />

            {/* Drawing toolbar */}
            <div className="shrink-0 border-t-8 border-b-2 border-t-[#e4e2e4] border-b-[#808080]">
                <DrawingToolbar />
            </div>

            {/* Status bar */}
            <footer className={`flex h-[62px] shrink-0 items-start border-t-[3px] border-t-[#e4e2e4] text-[32px] leading-[50px] ${CELL_FONT}`}>
                <div className="flex h-[56px] w-full items-start border-b-4 border-b-[#f4f2f4]">
                    <div className="h-[48px] flex-1 border-r-[3px] border-r-[#8c8a8c] pl-4">Ready</div>
                    <div className="flex h-[48px] w-[898px] shrink-0 items-center gap-[6px] overflow-hidden border-l-[3px] border-l-white pl-4">
                        <StatusCell width="w-[89px]" />
                        <StatusCell width="w-[346px]">Sum=0</StatusCell>
                        <StatusCell width="w-[74px]" />
                        <StatusCell width="w-[93px]">CAPS</StatusCell>
                        <StatusCell width="w-[79px]" />
                        <StatusCell width="w-[89px]" />
                        <StatusCell width="w-[89px]" />
                    </div>
                </div>
            </footer>
        </div>
    );
};

export default App;
